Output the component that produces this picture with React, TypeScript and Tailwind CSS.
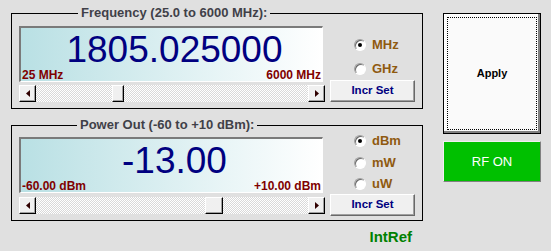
import React from "react";

const FONT = "font-['Liberation_Sans',Arial,sans-serif]";

function Arrow({ dir }: { dir: "left" | "right" }) {
  return (
    <div className="w-[17px] h-full bg-[#f0f0f0] border border-t-white border-l-white border-r-black border-b-black shadow-[inset_-1px_-1px_0_#a0a0a0] flex items-center justify-center shrink-0">
      <svg width="4" height="7" viewBox="0 0 4 7">
        <path d={dir === "left" ? "M4 0 L0 3.5 L4 7Z" : "M0 0 L4 3.5 L0 7Z"} fill="#300000" />
      </svg>
    </div>
  );
}

function ScrollBar({ thumbLeft, thumbWidth }: { thumbLeft: number; thumbWidth: number }) {
  return (
    <div className="flex h-[17px] w-[306px] bg-[repeating-conic-gradient(#d9d9d9_0%_25%,#ffffff_0%_50%)] bg-[length:2px_2px]">
      <Arrow dir="left" />
      <div className="flex-1 flex">
        <div style={{ width: thumbLeft }} />
        <div
          className="h-full bg-[#f0f0f0] border border-t-white border-l-white border-r-black border-b-black shadow-[inset_-1px_-1px_0_#a0a0a0]"
          style={{ width: thumbWidth }}
        />
      </div>
      <Arrow dir="right" />
    </div>
  );
}

function Display({ value, min, max }: { value: string; min: string; max: string }) {
  return (
    <div className="w-[304px] h-[56px] border-t-2 border-l-2 border-t-[#7a7a7a] border-l-[#7a7a7a] border-b border-r border-b-white border-r-white bg-linear-to-r from-[#b9e0e4] to-[#ffffff] flex flex-col">
      <div className="text-[37px] leading-[37px] text-[#000080] text-center pl-[6px] pt-[3px]">{value}</div>
      <div className="mt-auto flex justify-between px-[1px] text-[12px] leading-[14px] font-bold text-[#800000]">
        <span>{min}</span>
        <span>{max}</span>
      </div>
    </div>
  );
}

function Radio({ checked, label }: { checked?: boolean; label: string }) {
  return (
    <div className="flex items-center h-[12px] gap-[6px] pl-[24px]">
      <div className="w-[12px] h-[12px] rounded-full bg-white border border-t-[#a0a0a0] border-l-[#a0a0a0] border-b-white border-r-white shadow-[inset_1px_1px_0_#696969] flex items-center justify-center">
        {checked && <div className="w-[4px] h-[4px] rounded-full bg-black" />}
      </div>
      <span className="text-[13px] leading-[12px] font-bold text-[#8f5a10]">{label}</span>
    </div>
  );
}

function IncrSet() {
  return (
    <div className="w-[85px] h-[22px] bg-[#f0f0f0] border border-t-white border-l-white border-r-[#696969] border-b-[#696969] shadow-[inset_-1px_-1px_0_#a0a0a0] flex items-center justify-center text-[11.5px] font-bold text-[#000080]">
      Incr Set
    </div>
  );
}

export default function App() {
  return (
    <div className={`${FONT} w-[551px] h-[251px] bg-[#e0e0e0] flex overflow-hidden`}>
      <div className="ml-[11px] w-[410px] flex flex-col">
        <fieldset className="mt-[5px] border border-black px-[7px] pt-[5px] pb-[6px]">
          <legend className="ml-[59px] px-[3px] text-[13px] leading-[16px] font-bold text-[#404048]">
            Frequency (25.0 to 6000 MHz):
          </legend>
          <div className="flex">
            <div className="flex flex-col w-[306px]">
              <Display value="1805.025000" min="25 MHz" max="6000 MHz" />
              <div className="mt-[3px]">
                <ScrollBar thumbLeft={76} thumbWidth={12} />
              </div>
            </div>
            <div className="ml-[5px] flex flex-col">
              <div className="mt-[13px]">
                <Radio checked label="MHz" />
              </div>
              <div className="mt-[12px]">
                <Radio label="GHz" />
              </div>
              <div className="mt-[5px]">
                <IncrSet />
              </div>
            </div>
          </div>
        </fieldset>

        <fieldset className="mt-[8px] border border-black px-[7px] pt-[4px] pb-[4px]">
          <legend className="ml-[58px] px-[3px] text-[13px] leading-[16px] font-bold text-[#404048]">
            Power Out (-60 to +10 dBm):
          </legend>
          <div className="flex">
            <div className="flex flex-col w-[306px]">
              <Display value="-13.00" min="-60.00 dBm" max="+10.00 dBm" />
              <div className="mt-[4px]">
                <ScrollBar thumbLeft={169} thumbWidth={18} />
              </div>
            </div>
            <div className="ml-[5px] flex flex-col">
              <div className="-mt-[2px]">
                <Radio checked label="dBm" />
              </div>
              <div className="mt-[10px]">
                <Radio label="mW" />
              </div>
              <div className="mt-[9px]">
                <Radio label="uW" />
              </div>
              <div className="mt-[4px]">
                <IncrSet />
              </div>
            </div>
          </div>
        </fieldset>

        <div className="mt-[8px] pr-[9px] text-right text-[15px] leading-[16px] font-bold text-[#008000]">
          IntRef
        </div>
      </div>

      <div className="ml-[22px] mt-[13px] w-[98px] flex flex-col">
        <div className="h-[121px] border border-black bg-[#fafafa] shadow-[inset_-2px_-2px_0_#808080,inset_1px_1px_0_#ffffff] p-[3px]">
          <div className="w-full h-full border border-dotted border-black flex items-center justify-center text-[11px] font-bold text-black">
            Apply
          </div>
        </div>
        <div className="mt-[7px] h-[41px] bg-[#00c000] border border-t-[#f0f0f0] border-l-[#f0f0f0] border-r-[#808080] border-b-[#808080] flex items-center justify-center text-[13px] text-white">
          RF ON
        </div>
      </div>
    </div>
  );
}
